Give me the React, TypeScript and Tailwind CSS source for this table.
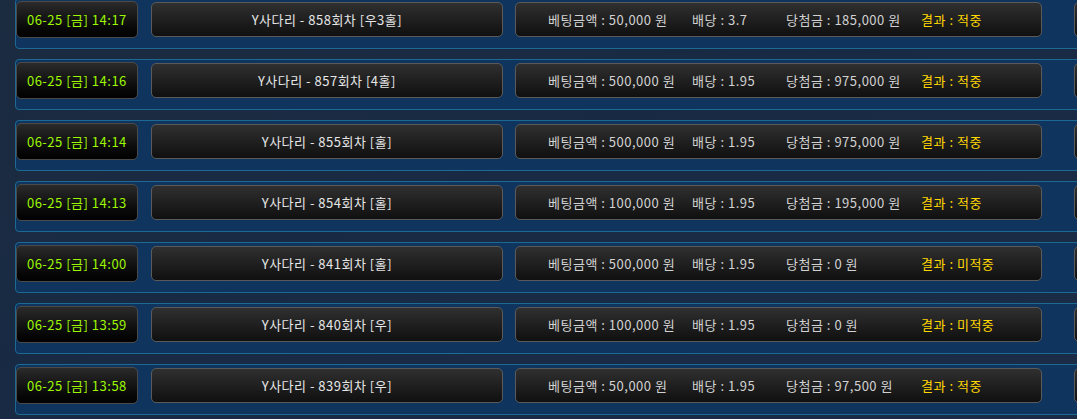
type Bet = {
  date: string;
  game: string;
  amount: string;
  odds: string;
  win: string;
  result: string;
};

const bets: Bet[] = [
  { date: '06-25 [금] 14:17', game: 'Y사다리 - 858회차 [우3홀]', amount: '50,000', odds: '3.7', win: '185,000', result: '적중' },
  { date: '06-25 [금] 14:16', game: 'Y사다리 - 857회차 [4홀]', amount: '500,000', odds: '1.95', win: '975,000', result: '적중' },
  { date: '06-25 [금] 14:14', game: 'Y사다리 - 855회차 [홀]', amount: '500,000', odds: '1.95', win: '975,000', result: '적중' },
  { date: '06-25 [금] 14:13', game: 'Y사다리 - 854회차 [홀]', amount: '100,000', odds: '1.95', win: '195,000', result: '적중' },
  { date: '06-25 [금] 14:00', game: 'Y사다리 - 841회차 [홀]', amount: '500,000', odds: '1.95', win: '0', result: '미적중' },
  { date: '06-25 [금] 13:59', game: 'Y사다리 - 840회차 [우]', amount: '100,000', odds: '1.95', win: '0', result: '미적중' },
  { date: '06-25 [금] 13:58', game: 'Y사다리 - 839회차 [우]', amount: '50,000', odds: '1.95', win: '97,500', result: '적중' },
];

const font = { fontFamily: '"Noto Sans CJK KR", "Noto Sans", sans-serif' };

function BetRow({ bet }: { bet: Bet }) {
  return (
    <div className="flex items-start h-[51px] mb-[10px] w-[1100px] border border-[#1c6a93] rounded-[4px] bg-[#0f345e] text-[13px] tracking-[0.5px]">
      {/* date */}
      <div className="mt-[2px] w-[122px] h-[37px] flex items-center justify-center rounded-[5px] border border-[#4a4a4a] bg-gradient-to-b from-[#2b2b2b] to-[#020202] text-[#9cf700]">
        {bet.date}
      </div>

      {/* game name */}
      <div className="mt-[3px] ml-[13px] w-[353px] h-[35px] flex items-center justify-center rounded-[5px] border border-[#5a5a5a] bg-gradient-to-b from-[#303030] to-[#101010] text-[#e6e6e6]">
        {bet.game}
      </div>

      {/* bet info */}
      <div className="mt-[3px] ml-[12px] w-[528px] h-[35px] flex items-center pl-[32px] rounded-[5px] border border-[#5a5a5a] bg-gradient-to-b from-[#303030] to-[#101010] text-[#d2d2d2] whitespace-nowrap">
        <span className="w-[144px]">베팅금액 : {bet.amount} 원</span>
        <span className="w-[94px]">배당 : {bet.odds}</span>
        <span className="w-[135px]">당첨금 : {bet.win} 원</span>
        <span className="text-[#ffd800]">결과 : {bet.result}</span>
      </div>

      {/* next column, cut off */}
      <div className="mt-[3px] ml-[32px] w-[40px] h-[35px] rounded-[5px] border border-[#5a5a5a] bg-gradient-to-b from-[#303030] to-[#101010]" />
    </div>
  );
}

export default function App() {
  return (
    <div
      className="w-[1077px] h-[419px] overflow-hidden bg-gradient-to-br from-[#1b2b40] via-[#182a44] to-[#1a2c46]"
      style={font}
    >
      <div className="pl-[15px] -mt-[2px]">
        {bets.map((b, i) => (
          <BetRow key={i} bet={b} />
        ))}
      </div>
    </div>
  );
}
